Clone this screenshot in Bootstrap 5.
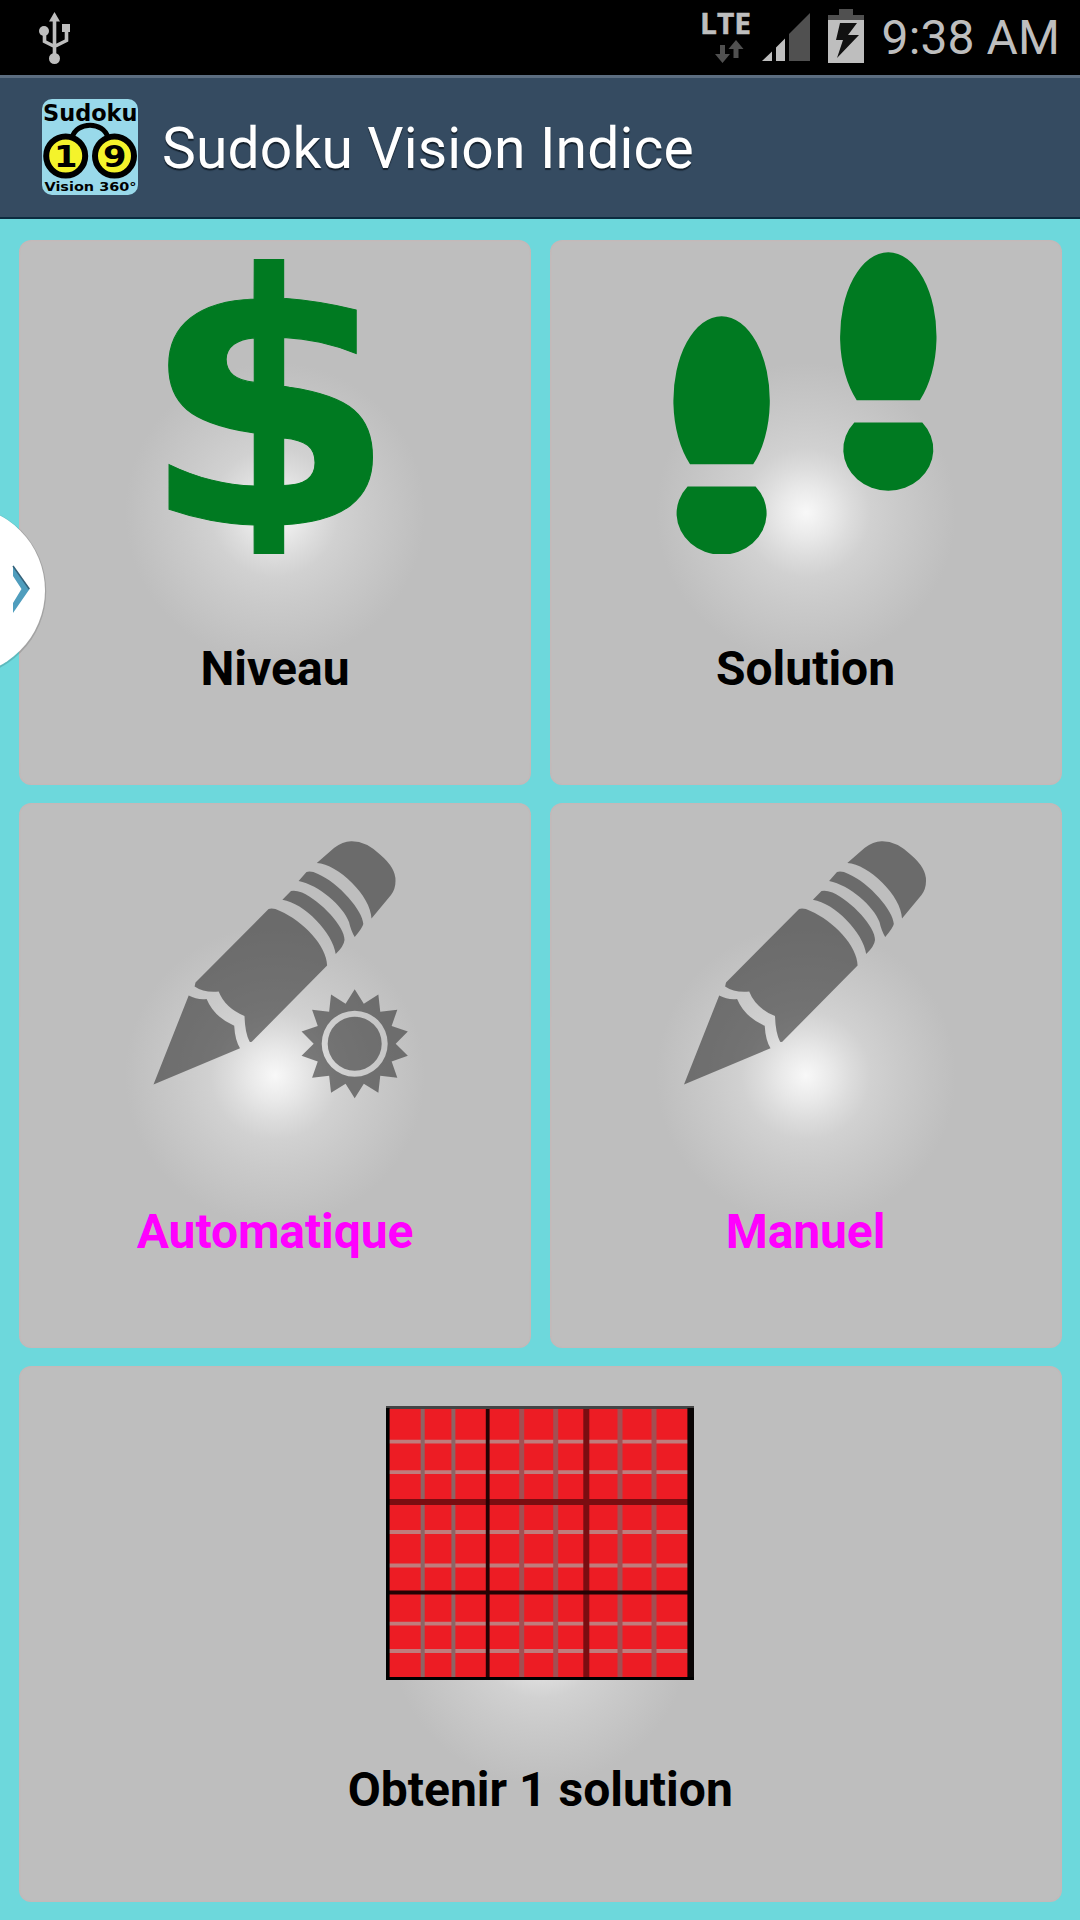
<!DOCTYPE html>
<html lang="fr">
<head>
<meta charset="utf-8">
<meta name="viewport" content="width=device-width, initial-scale=1">
<title>Sudoku Vision Indice</title>
<link href="https://cdn.jsdelivr.net/npm/bootstrap@5.3.0/dist/css/bootstrap.min.css" rel="stylesheet">
<style>
body { font-family: Roboto, "Noto Sans", sans-serif; background: #6dd8dc; width: 1080px; height: 1920px; overflow: hidden; }
.status-bar { height: 75px; background: #000; color: #bebebe; padding: 0 20px 0 36px; }
.clock { font-size: 48px; line-height: 75px; white-space: nowrap; letter-spacing: .1px; }
.title-bar { height: 144px; padding: 0 0 2px 42px; background: #354b61; border-top: 3px solid #5b6d80; border-bottom: 2px solid #0c2c40; }
.title-text { font-size: 57px; line-height: 66px; font-weight: 400; color: #fff; margin: 0 0 0 24px; padding-top: 5px; letter-spacing: .14px; text-shadow: 0 2px 1px #14202c; white-space: nowrap; }
.board { height: 1701px; padding: 21px 18.5px 18px 19px; gap: 18px; }
.board-row { gap: 18.5px; }
.tile { border: 0; padding: 0; border-radius: 12px; box-shadow: inset 0 0 0 1.5px #c3b9b9; background: radial-gradient(circle 150px at 50% 50%, #f8f8f8 0, #e9e9e9 17%, #dcdcdc 30%, #d1d1d1 43%, #cacaca 62%, #c3c3c3 84%, #bebebe 100%) #bebebe; }
.tile svg { width: 100%; height: 314px; display: block; }
.tile-label { font-size: 48px; line-height: 56px; font-weight: 700; color: #000; margin-top: 87px; white-space: nowrap; }
.tall { height: 545px; }
.wide-tile { height: 536px; }
.wide-tile .tile-label { margin-top: 82px; }
.locked .tile-label { color: #f0f; letter-spacing: -.1px; }
.locked svg { fill: #343434; }
.locked svg g { fill-opacity: .6; }
.handle { left: 0; top: 500px; width: 56px; height: 182px; }
</style>
</head>
<body class="m-0 d-flex flex-column position-relative">
<header class="status-bar d-flex align-items-center justify-content-between flex-shrink-0">
  <svg width="38" height="75" viewBox="36 0 38 75" fill="#bebebe" stroke="#bebebe">
    <path d="M54.5 12l5.5 9.5H49z" stroke="none"/>
    <path d="M54.5 20v36M44.5 31v10.500l10 5M66.500 30v10.500l-12 6" fill="none" stroke-width="3.600"/>
    <circle cx="44" cy="31" r="5" stroke="none"/><rect x="62" y="24" width="8" height="8" stroke="none"/>
    <circle cx="54.500" cy="58.500" r="5.500" stroke="none"/>
  </svg>
  <div class="d-flex align-items-center">
    <svg width="183" height="75" viewBox="699 0 183 75" fill="#bebebe">
      <text x="700" y="34" font-family="Open Sans" font-weight="700" font-size="29" textLength="51" lengthAdjust="spacingAndGlyphs" stroke="#bebebe" stroke-width=".5">LTE</text>
      <path fill="#505050" d="M720 45h5v9h5l-7.500 9-7.500-9h5zM733.500 58h5v-9h5l-7.500-9-7.500 9h5z"/>
      <path d="M762 61l10-9.500V61zM776 61V47.500l9-9V61z"/>
      <path fill="#505050" d="M789 61V34l21-21v48z"/>
      <path fill="#505050" d="M839 9h14v6h11v5h-36v-5h11z"/>
      <path d="M828 20h36v43h-36z"/>
      <path fill="#111" d="M840 23h17l-9 12h11l-22 23 6-18h-7z"/>
    </svg>
    <span class="clock">9:38 AM</span>
  </div>
</header>
<nav class="title-bar d-flex align-items-center flex-shrink-0">
  <svg width="96" height="96" viewBox="42 99 96 96" class="flex-shrink-0" font-family="DejaVu Sans" font-weight="700">
    <rect x="42" y="99" width="96" height="96" rx="10" fill="#99d9ea"/>
    <path d="M72 138c4-17 32-17 36 0" fill="none" stroke="#000" stroke-width="5"/>
    <g fill="#f4f32b" stroke="#000" stroke-width="6"><circle cx="65.700" cy="156" r="19.500"/><circle cx="114.500" cy="156" r="19.500"/></g>
    <text x="43" y="120.500" font-size="23" textLength="94.500" lengthAdjust="spacingAndGlyphs">Sudoku</text>
    <text x="54" y="167" font-size="31" textLength="23.500" lengthAdjust="spacingAndGlyphs">1</text>
    <text x="103" y="167" font-size="31" textLength="23.500" lengthAdjust="spacingAndGlyphs">9</text>
    <text x="44.500" y="190.500" font-size="13" textLength="92" lengthAdjust="spacingAndGlyphs">Vision 360°</text>
  </svg>
  <h1 class="title-text">Sudoku Vision Indice</h1>
</nav>
<main class="board d-flex flex-column flex-shrink-0">
  <div class="board-row d-flex">
    <button type="button" class="tile tall flex-fill w-50 d-flex flex-column align-items-center">
      <svg viewBox="19 240 512 314"><text transform="translate(139.800 525) scale(1.140 1.075)" font-family="DejaVu Sans" font-weight="700" font-size="325" fill="#007a21" stroke="#007a21" stroke-width="1">$</text></svg>
      <span class="tile-label">Niveau</span>
    </button>
    <button type="button" class="tile tall flex-fill w-50 d-flex flex-column align-items-center">
      <svg viewBox="550.200 240 512 314" fill="#007a21">
        <defs><g id="foot"><path d="M690.200 464.200A48.200 84.300 0 1 1 753.400 464.200Z"/><path d="M687.800 486.400H755.800A45 41.300 0 1 1 687.800 486.400Z"/></g></defs>
        <use href="#foot"/><use href="#foot" x="166.700" y="-64"/>
      </svg>
      <span class="tile-label">Solution</span>
    </button>
  </div>
  <div class="board-row d-flex">
    <button type="button" class="tile tall locked flex-fill w-50 d-flex flex-column align-items-center">
      <svg viewBox="19 803 512 314">
        <g id="pencil">
          <path d="M316.800 863L334 848Q343 841 351.500 841.200Q366 841 380 854.500Q396 868 395.500 881Q395.500 889 391 895L371.500 918.500C371 896 338 864 316.800 863Z"/>
          <path d="M298.600 881L306.500 872Q311 870.500 318 874C339 883 363 911 363.300 924Q362.500 928 354.700 936.900Q351 931 349 922C343 906 319 885 298.600 881Z"/>
          <path d="M282.400 899.800L291 891Q295 889.800 302 892.500C321 901 345 927 344.500 940Q344 946 335.700 954.100C333 933 304 903 282.400 899.800Z"/>
          <path d="M268.600 909Q273 907.500 280 911C303 921 327 946 327.100 965.600L253 1040.500Q251 1043 249.500 1041.500Q245 1033 244.500 1016.100Q225 1008 218.700 991.600Q204 993 194.600 986.500L195.500 982.500Z"/>
          <path d="M188.700 995.500Q197 1000 206.600 999Q214 1017 234.200 1025.700Q235 1040 240 1048.200L153.500 1084.500Z"/>
        </g>
        <g id="sun" fill-rule="evenodd"></g>
      </svg>
      <span class="tile-label">Automatique</span>
    </button>
    <button type="button" class="tile tall locked flex-fill w-50 d-flex flex-column align-items-center">
      <svg viewBox="549.500 803 512 314"><use href="#pencil" x="530"/></svg>
      <span class="tile-label">Manuel</span>
    </button>
  </div>
  <div class="board-row d-flex">
    <button type="button" class="tile wide-tile w-100 d-flex flex-column align-items-center">
      <svg viewBox="19 1366 1042.500 314" fill="none">
        <rect x="386" y="1406" width="308" height="274" fill="#ed1c24"/>
        <path d="M389 1441.700H688M389 1472.200H688M389 1532H688M389 1565.500H688M389 1623.700H688M389 1651H688" stroke="#c07c7c" stroke-width="3.800"/>
        <path d="M422.700 1408V1678M453.400 1408V1678" stroke="#8e6464" stroke-width="4"/>
        <path d="M521.700 1408V1678M555.700 1408V1678M620 1408V1678M654 1408V1678" stroke="#a34f52" stroke-width="5"/>
        <path d="M586.300 1408V1678M388 1502H688" stroke="#7b0d11" stroke-width="6"/>
        <path d="M487.700 1408V1678M388 1592.500H688" stroke="#260204" stroke-width="3.800"/>
        <path d="M386 1407.500H694" stroke="#444" stroke-width="3"/>
        <path d="M387.800 1408V1680" stroke="#000" stroke-width="3.600"/>
        <path d="M690.700 1408V1680" stroke="#090505" stroke-width="6.600"/>
        <path d="M386 1678.500H694" stroke="#000" stroke-width="3"/>
      </svg>
      <span class="tile-label">Obtenir 1 solution</span>
    </button>
  </div>
</main>
<svg class="handle position-absolute" viewBox="0 500 56 182">
  <circle cx="-40" cy="591.300" r="86.200" fill="#000" fill-opacity=".14"/>
  <circle cx="-40" cy="590.500" r="85" fill="#fff"/>
  <path d="M13 565.500L29.600 589L13 613V603L21.500 589L13 576Z" fill="#4f9dbd"/>
  <path d="M13 566L29.300 589" stroke="#35627a" stroke-width="1.500"/>
</svg>
<script src="https://cdn.jsdelivr.net/npm/bootstrap@5.3.0/dist/js/bootstrap.bundle.min.js"></script>
<script>
// Fourteen-pointed sun with a see-through ring
const cx = 354.7, cy = 1043.700;
let d = '';
for (let i = 0; i < 28; i++) {
  const r = i % 2 ? 41 : 54.5, a = Math.PI * i / 14;
  d += (i ? 'L' : 'M') + (cx + r * Math.sin(a)).toFixed(2) + ' ' + (cy - r * Math.cos(a)).toFixed(2);
}
d += 'Z';
for (const r of [33, 27]) d += `M${cx - r} ${cy}a${r} ${r} 0 1 0 ${2 * r} 0a${r} ${r} 0 1 0 ${-2 * r} 0Z`;
const p = document.createElementNS('http://www.w3.org/2000/svg', 'path');
p.setAttribute('d', d);
document.getElementById('sun').appendChild(p);
</script>
</body>
</html>
